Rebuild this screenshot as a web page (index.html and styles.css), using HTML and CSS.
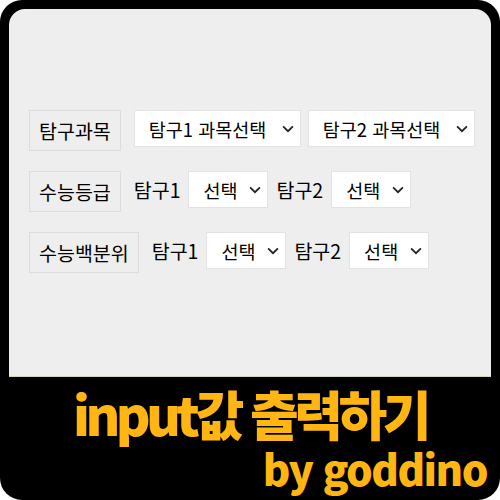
FILE: index.html
```html
<!DOCTYPE html>
<html lang="ko">
<head>
    <meta charset="UTF-8">
    <meta name="viewport" content="width=device-width, initial-scale=1.0">
    <title>input값 출력하기</title>
    <link rel="stylesheet" href="styles.css">
</head>
<body>

<div class="frame">
    <div class="panel">
        <div class="row">
            <div class="label">탐구과목</div>
            <div class="select wide">탐구1 과목선택 <svg class="chev" viewBox="0 0 11 7"><path d="M1 1l4.5 4.5L10 1"/></svg></div>
            <div class="select wide">탐구2 과목선택 <svg class="chev" viewBox="0 0 11 7"><path d="M1 1l4.5 4.5L10 1"/></svg></div>
        </div>
        <div class="row">
            <div class="label">수능등급</div>
            <span class="text">탐구1</span>
            <div class="select">선택 <svg class="chev" viewBox="0 0 11 7"><path d="M1 1l4.5 4.5L10 1"/></svg></div>
            <span class="text">탐구2</span>
            <div class="select">선택 <svg class="chev" viewBox="0 0 11 7"><path d="M1 1l4.5 4.5L10 1"/></svg></div>
        </div>
        <div class="row">
            <div class="label">수능백분위</div>
            <span class="text">탐구1</span>
            <div class="select">선택 <svg class="chev" viewBox="0 0 11 7"><path d="M1 1l4.5 4.5L10 1"/></svg></div>
            <span class="text">탐구2</span>
            <div class="select">선택 <svg class="chev" viewBox="0 0 11 7"><path d="M1 1l4.5 4.5L10 1"/></svg></div>
        </div>
    </div>
    <div class="banner">
        <div class="title">input값 출력하기</div>
        <div class="byline">by goddino</div>
    </div>
</div>

</body>
</html>
```

FILE: styles.css
```css
body {
    margin: 0;
    background: #fff;
    font-family: 'Noto Sans CJK KR', 'Noto Sans', sans-serif;
}

.frame {
    width: 500px;
    height: 500px;
    box-sizing: border-box;
    padding: 9px 9px 0;
    background: #000;
    border-radius: 22px;
    display: flex;
    flex-direction: column;
}

.panel {
    height: 368px;
    box-sizing: border-box;
    padding: 101px 0 0 20px;
    background: #eee;
    border-radius: 16px 16px 0 0;
    border-bottom: 1px solid #d6d6ae;
}

.row {
    display: flex;
    align-items: flex-start;
    margin-bottom: 20px;
    color: #000;
}

.label {
    box-sizing: border-box;
    height: 41px;
    padding: 0 9px;
    line-height: 39px;
    font-size: 19.5px;
    border: 1px solid #dcdcdc;
    margin-right: 13px;
}

.text {
    font-size: 19.5px;
    line-height: 37px;
    margin-right: 8px;
}

.select {
    box-sizing: border-box;
    width: 80px;
    height: 37px;
    padding: 0 6px 0 14px;
    display: flex;
    align-items: center;
    background: #fff;
    border: 1px solid #e2e2e2;
    font-size: 18.5px;
    margin-right: 8px;
}

.select.wide {
    width: 167px;
    margin-right: 7px;
}

.chev {
    width: 12px;
    height: 8px;
    margin-left: auto;
    fill: none;
    stroke: #222;
    stroke-width: 1.6;
}

.banner {
    flex: 1;
    color: #ffb612;
    font-weight: 900;
}

.title {
    text-align: center;
    font-size: 53px;
    line-height: 52px;
    letter-spacing: -4.5px;
    margin-top: 10px;
}

.byline {
    text-align: right;
    font-size: 42px;
    line-height: 40px;
    letter-spacing: -1.5px;
    padding-right: 4px;
    margin-top: 9px;
}
```
